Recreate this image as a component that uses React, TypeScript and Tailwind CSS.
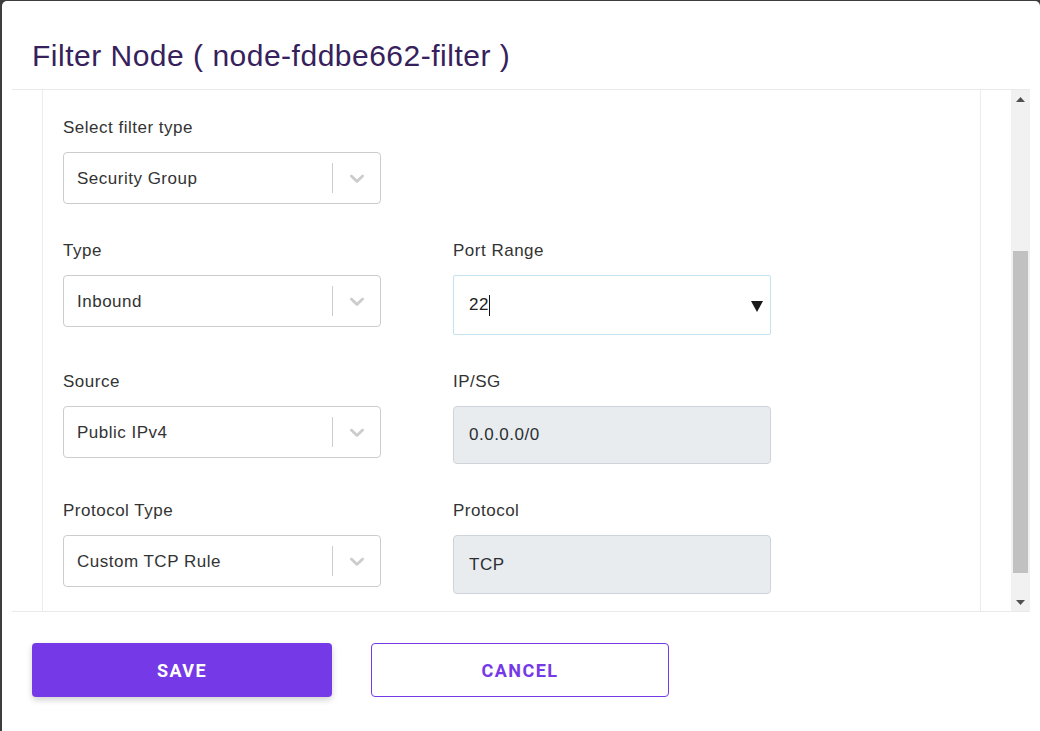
import React from "react";

const fieldLabel = "block h-6 mb-3 text-[17px] leading-6 tracking-[0.5px] text-[#333333]";

function Chevron() {
  return (
    <svg viewBox="0 0 20 20" className="w-6 h-6" fill="#cccccc">
      <path d="M4.516 7.548c0.436-0.446 1.043-0.481 1.576 0l3.908 3.747 3.908-3.747c0.533-0.481 1.141-0.446 1.574 0 0.436 0.445 0.408 1.197 0 1.615-0.406 0.418-4.695 4.502-4.695 4.502-0.217 0.223-0.502 0.335-0.787 0.335s-0.57-0.112-0.789-0.335c0 0-4.287-4.084-4.695-4.502s-0.436-1.17 0-1.615z" />
    </svg>
  );
}

function SelectField({ label, value }: { label: string; value: string }) {
  return (
    <div>
      <label className={fieldLabel}>{label}</label>
      <div className="flex items-center h-[52px] border border-[#cccccc] rounded-[4px] bg-white">
        <span className="flex-1 pl-[13px] pt-[2px] text-[17px] tracking-[0.5px] text-[#333333]">{value}</span>
        <span className="w-px h-[30px] bg-[#cccccc]" />
        <span className="w-[47px] flex items-center justify-center">
          <Chevron />
        </span>
      </div>
    </div>
  );
}

function ReadonlyField({ label, value, h }: { label: string; value: string; h: string }) {
  return (
    <div>
      <label className={fieldLabel}>{label}</label>
      <div
        className={`flex items-center ${h} border border-[#ced4da] rounded-[4px] bg-[#e9ecef] pl-[15px] text-[17px] tracking-[0.5px] text-[#2b2f33]`}
      >
        {value}
      </div>
    </div>
  );
}

export default function App() {
  return (
    <div
      className="w-[1040px] h-[731px] overflow-hidden bg-[#3d3d3d] pt-px pl-[2px]"
      style={{ fontFamily: '"Liberation Sans", Arial, sans-serif' }}
    >
      <div className="h-[760px] bg-white rounded-[5px] flex flex-col">
        {/* Header */}
        <div className="h-[88px] pt-[40px] pl-[30px]">
          <h2 className="text-[30px] leading-[30px] tracking-[0.5px] text-[#36215c]">
            Filter Node ( node-fddbe662-filter )
          </h2>
        </div>

        {/* Body */}
        <div className="mx-[10px] h-[523px] border-y border-[#e9e9e9] flex overflow-hidden">
          <div className="flex-1 px-[30px]">
            <div className="h-full border-x border-[#ececec] pl-[20px] pt-[26px]">
              <div className="grid grid-cols-[318px_318px] gap-x-[72px] gap-y-[35px]">
                <SelectField label="Select filter type" value="Security Group" />
                <div />

                <SelectField label="Type" value="Inbound" />
                <div>
                  <label className={fieldLabel}>Port Range</label>
                  <div className="flex items-center h-[60px] border border-[#c3e2ef] rounded-[2px] bg-white pl-[15px] pr-[7px] text-[17px] tracking-[0.5px] text-[#222222]">
                    <span>22</span>
                    <span className="w-px h-[21px] bg-[#111111]" />
                    <svg width="12" height="11" viewBox="0 0 12 11" className="ml-auto mt-[2px]">
                      <path d="M0 0 L12 0 L6 11 Z" fill="#1a1a1a" />
                    </svg>
                  </div>
                </div>

                <SelectField label="Source" value="Public IPv4" />
                <ReadonlyField label="IP/SG" value="0.0.0.0/0" h="h-[58px]" />

                <SelectField label="Protocol Type" value="Custom TCP Rule" />
                <ReadonlyField label="Protocol" value="TCP" h="h-[59px]" />
              </div>
            </div>
          </div>

          {/* Scrollbar */}
          <div className="w-[19px] bg-[#f1f1f1] flex flex-col items-center">
            <div className="h-[18px] flex items-center justify-center">
              <svg width="9" height="5" viewBox="0 0 9 5">
                <path d="M0 5 L4.5 0 L9 5 Z" fill="#505050" />
              </svg>
            </div>
            <div className="flex-1 w-full flex flex-col">
              <div className="h-[143px]" />
              <div className="h-[322px] mx-[2px] bg-[#c1c1c1]" />
            </div>
            <div className="h-[18px] flex items-center justify-center">
              <svg width="9" height="5" viewBox="0 0 9 5">
                <path d="M0 0 L9 0 L4.5 5 Z" fill="#505050" />
              </svg>
            </div>
          </div>
        </div>

        {/* Footer */}
        <div className="flex gap-[39px] pl-[30px] pt-[31px]">
          <button
            className="w-[300px] h-[54px] rounded-[4px] bg-[#7539e7] text-white text-[18px] font-bold tracking-[0.08em] shadow-[0_3px_6px_rgba(0,0,0,0.18)]"
            style={{ fontFamily: "Roboto, sans-serif" }}
          >
            SAVE
          </button>
          <button
            className="w-[298px] h-[54px] rounded-[4px] border border-[#7539e7] bg-white text-[#7539e7] text-[18px] font-bold tracking-[0.08em]"
            style={{ fontFamily: "Roboto, sans-serif" }}
          >
            CANCEL
          </button>
        </div>
      </div>
    </div>
  );
}
